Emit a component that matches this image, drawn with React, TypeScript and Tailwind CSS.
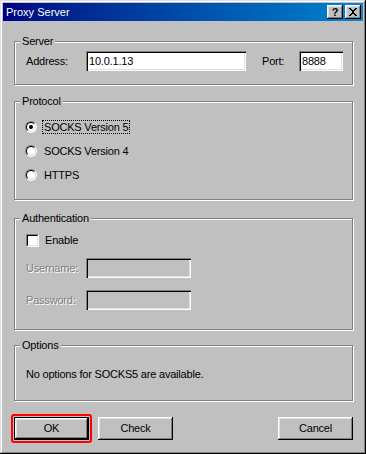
import type { ReactNode } from 'react';

const bevel =
  'shadow-[inset_-1px_-1px_0_#000,inset_1px_1px_0_#fff,inset_-2px_-2px_0_#808080,inset_2px_2px_0_#dfdfdf]';
const sunken =
  'shadow-[inset_1px_1px_0_#808080,inset_2px_2px_0_#000,inset_-1px_-1px_0_#fff,inset_-2px_-2px_0_#dfdfdf]';
const disabledText = 'text-[#808080] [text-shadow:1px_1px_0_#fff]';

function Group({ label, className, children }: { label: string; className: string; children: ReactNode }) {
  return (
    <div className={`border border-[#808080] shadow-[1px_1px_0_#fff,inset_1px_1px_0_#fff] ${className}`}>
      <div className="-mt-[7px] ml-[5px] w-fit bg-[#c0c0c0] px-[2px] leading-[13px]">{label}</div>
      {children}
    </div>
  );
}

function Radio({ label, checked, focused }: { label: string; checked?: boolean; focused?: boolean }) {
  return (
    <div className="flex h-[24px] items-center pl-[10px]">
      <span className="size-[12px] rounded-full border border-t-[#808080] border-l-[#808080] border-b-white border-r-white">
        <span className="flex size-full items-center justify-center rounded-full border border-t-black border-l-black border-b-[#dfdfdf] border-r-[#dfdfdf] bg-white">
          {checked && <span className="size-[4px] rounded-full bg-black" />}
        </span>
      </span>
      <span
        className={`ml-[5px] border px-[1px] leading-[12px] ${focused ? 'border-dotted border-black' : 'border-transparent'}`}
      >
        {label}
      </span>
    </div>
  );
}

function Field({ value, width, disabled }: { value?: string; width: string; disabled?: boolean }) {
  return (
    <div className={`h-[20px] ${width} ${sunken} ${disabled ? 'bg-[#c0c0c0]' : 'bg-white'} pl-[3px] leading-[20px]`}>
      {value}
    </div>
  );
}

function Button({ label, isDefault }: { label: string; isDefault?: boolean }) {
  return (
    <div
      className={`flex h-[23px] w-[75px] items-center justify-center ${
        isDefault ? 'relative border border-black' : ''
      }`}
    >
      <div className={`flex size-full items-center justify-center ${bevel}`}>{label}</div>
      {isDefault && (
        <div className="absolute -top-[4px] -left-[4px] -right-[4px] -bottom-[4px] rounded-[3px] border-2 border-[#ff0000]" />
      )}
    </div>
  );
}

export default function App() {
  return (
    <div className="flex h-[454px] w-[366px] flex-col bg-[#c0c0c0] p-[3px] font-['Liberation_Sans',Arial,sans-serif] text-[11px] text-black shadow-[inset_-1px_-1px_0_#000,inset_1px_1px_0_#dfdfdf,inset_-2px_-2px_0_#808080,inset_2px_2px_0_#fff]">
      <div className="flex h-[18px] items-center bg-linear-to-r from-[#000080] to-[#1084d0] pl-[3px] pr-[2px]">
        <span className="flex-1 text-white">Proxy Server</span>
        <div className="flex gap-[2px]">
          <div className={`flex h-[14px] w-[16px] items-center justify-center bg-[#c0c0c0] text-[11px] font-bold leading-none ${bevel}`}>
            ?
          </div>
          <div className={`flex h-[14px] w-[16px] items-center justify-center bg-[#c0c0c0] ${bevel}`}>
            <svg width="16" height="14" viewBox="0 0 16 14" shapeRendering="crispEdges">
              <path d="M4 3h2v1h1v1h2V4h1V3h2v1h-1v1h-1v1h-1v2h1v1h1v1h1v1h-2v-1h-1V9H7v1H6v1H4v-1h1V9h1V8h1V6H6V5H5V4H4z" fill="#000" />
            </svg>
          </div>
        </div>
      </div>

      <div className="flex flex-1 flex-col pl-[11px] pr-[10px] tracking-[-0.2px]">
        <Group label="Server" className="mt-[20px] pb-[13px]">
          <div className="mt-[3px] flex items-center pl-[11px]">
            <span className="w-[60px]">Address:</span>
            <Field value="10.0.1.13" width="w-[160px]" />
            <span className="ml-[16px] w-[37px]">Port:</span>
            <Field value="8888" width="w-[44px]" />
          </div>
        </Group>

        <Group label="Protocol" className="mt-[16px] pb-[12px]">
          <div className="mt-[7px]">
            <Radio label="SOCKS Version 5" checked focused />
            <Radio label="SOCKS Version 4" />
            <Radio label="HTTPS" />
          </div>
        </Group>

        <Group label="Authentication" className="mt-[18px] pb-[19px]">
          <div className="mt-[7px] flex h-[16px] items-center pl-[11px]">
            <span className="size-[13px] border border-t-[#808080] border-l-[#808080] border-b-white border-r-white">
              <span className="block size-full border border-t-black border-l-black border-b-[#dfdfdf] border-r-[#dfdfdf] bg-white" />
            </span>
            <span className="ml-[6px]">Enable</span>
          </div>
          <div className="mt-[10px] flex items-center pl-[11px]">
            <span className={`w-[60px] ${disabledText}`}>Username:</span>
            <Field width="w-[105px]" disabled />
          </div>
          <div className="mt-[12px] flex items-center pl-[11px]">
            <span className={`w-[60px] ${disabledText}`}>Password:</span>
            <Field width="w-[105px]" disabled />
          </div>
        </Group>

        <Group label="Options" className="mt-[15px] pb-[18px]">
          <div className="mt-[14px] h-[16px] pl-[11px] leading-[16px]">No options for SOCKS5 are available.</div>
        </Group>

        <div className="mt-[16px] flex">
          <Button label="OK" isDefault />
          <div className="ml-[9px]">
            <Button label="Check" />
          </div>
          <div className="ml-auto">
            <Button label="Cancel" />
          </div>
        </div>
      </div>
    </div>
  );
}
